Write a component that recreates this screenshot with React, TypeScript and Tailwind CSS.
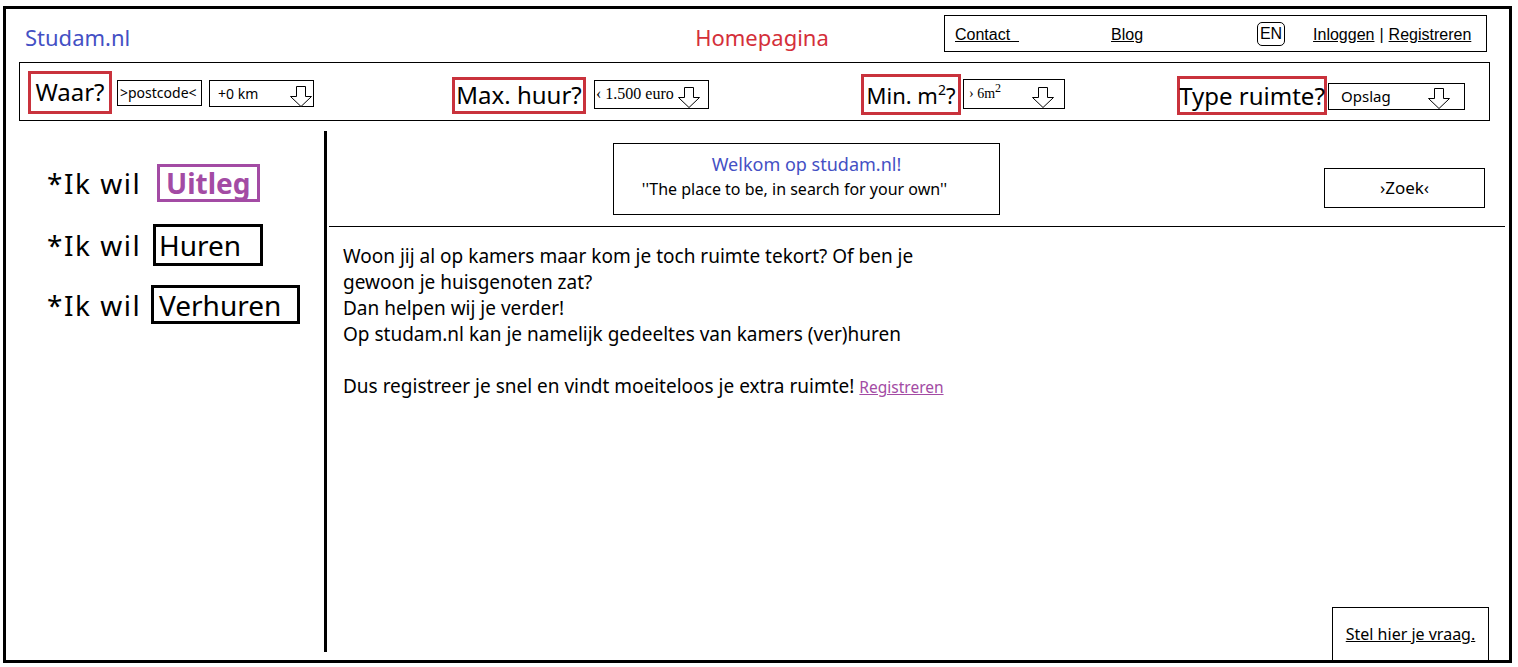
import React from "react";

function DownArrow() {
  return (
    <svg width="22" height="21" viewBox="0 0 22 21" className="block">
      <polygon
        points="6.5,0.5 15.5,0.5 15.5,10.5 21.5,10.5 11,20.5 0.5,10.5 6.5,10.5"
        fill="white"
        stroke="black"
        strokeWidth="1"
      />
    </svg>
  );
}

function RedLabel({ children, cls }: { children: React.ReactNode; cls: string }) {
  return (
    <div
      className={
        "border-[3px] border-[#c9323c] flex items-center justify-center whitespace-nowrap leading-none text-black font-['Comic_Sans_MS','Noto_Sans',sans-serif] " +
        cls
      }
    >
      {children}
    </div>
  );
}

export default function App() {
  return (
    <div className="w-[1518px] h-[667px] bg-white overflow-hidden pt-[6px] pl-[3px]">
      <div className="w-[1509px] h-[657px] border-[3px] border-black flex flex-col font-['Comic_Sans_MS','Noto_Sans',sans-serif]">
        {/* Header */}
        <div className="flex h-[53px] shrink-0">
          <div className="w-[574px] pl-[19px] pt-[13px] text-[22px] leading-[30px] text-[#4450c4]">
            Studam.nl
          </div>
          <div className="flex-1 flex justify-center pt-[13px] text-[22px] leading-[30px] text-[#d42f3a]">
            Homepagina
          </div>
          <div className="mt-[6px] mr-[22px] w-[543px] h-[37px] border border-black flex items-center pt-[2px] font-['Liberation_Sans',Arial,sans-serif] text-[16px] text-black">
            <span className="ml-[10px] underline whitespace-pre">Contact  </span>
            <span className="ml-[92px] underline">Blog</span>
            <span className="ml-[114px] w-[28px] h-[24px] -mt-[2px] border border-black rounded-[5px] flex items-center justify-center">
              EN
            </span>
            <span className="ml-[28px] underline">Inloggen</span>
            <span className="mx-[5px]">|</span>
            <span className="underline">Registreren</span>
          </div>
        </div>

        {/* Filter bar */}
        <div className="ml-[13px] mr-[19px] h-[59px] shrink-0 border border-black flex items-center">
          <RedLabel cls="ml-[8px] w-[84px] h-[43px] mt-[1px] text-[24px]">Waar?</RedLabel>
          <div className="ml-[5px] w-[85px] h-[26px] mt-[3px] border border-black flex items-center pl-[2px] text-[14px] leading-none whitespace-nowrap">
            &gt;postcode&lt;
          </div>
          <div className="ml-[7px] w-[105px] h-[27px] mt-[4px] border border-black flex items-end justify-between">
            <span className="self-center pl-[8px] text-[14px] leading-none">+0 km</span>
            <div className="mr-[1px] translate-y-[1px]">
              <DownArrow />
            </div>
          </div>

          <RedLabel cls="ml-[138px] w-[134px] h-[37px] mt-[7px] text-[24px]">Max. huur?</RedLabel>
          <div className="ml-[8px] w-[115px] h-[29px] mt-[5px] border border-black flex items-end justify-between">
            <span className="self-center pl-[1px] text-[16px] leading-none whitespace-nowrap font-['Liberation_Serif',serif]">
              &lsaquo; 1.500 euro
            </span>
            <div className="mr-[8px]">
              <DownArrow />
            </div>
          </div>

          <RedLabel cls="ml-[152px] w-[100px] h-[41px] mt-[6px] text-[22px]">
            <span>
              Min. m<sup className="text-[14px] -top-[9px] relative align-baseline">2</sup>?
            </span>
          </RedLabel>
          <div className="ml-[2px] w-[102px] h-[30px] mt-[4px] border border-black flex items-end justify-between">
            <span className="self-center pl-[5px] text-[14px] leading-none font-['Liberation_Serif',serif]">
              &rsaquo; 6m<sup className="text-[12px] relative -top-[6px] align-baseline">2</sup>
            </span>
            <div className="mr-[10px]">
              <DownArrow />
            </div>
          </div>

          <RedLabel cls="ml-[112px] w-[150px] h-[39px] mt-[8px] text-[24px]">Type ruimte?</RedLabel>
          <div className="ml-[1px] w-[137px] h-[27px] mt-[9px] border border-black flex items-end justify-between">
            <span className="self-center pl-[12px] text-[15px] leading-none">Opslag</span>
            <div className="mr-[14px]">
              <DownArrow />
            </div>
          </div>
        </div>

        {/* Main */}
        <div className="flex flex-1 min-h-0">
          {/* Left column */}
          <div className="w-[321px] h-[521px] mt-[10px] shrink-0 border-r-[3px] border-black flex flex-col pl-[41px] text-[28px] leading-none text-black">
            <div className="flex items-center mt-[33px]">
              <span className="w-[104px] tracking-[1.5px]">*Ik wil</span>
              <span className="ml-[6px] w-[103px] h-[38px] border-[3px] border-[#a34ba4] text-[#a34ba4] font-bold flex items-center pl-[6px]">
                Uitleg
              </span>
            </div>
            <div className="flex items-center mt-[22px]">
              <span className="w-[104px] tracking-[1.5px]">*Ik wil</span>
              <span className="ml-[2px] w-[110px] h-[42px] border-[3px] border-black flex items-center pl-[3px]">
                Huren
              </span>
            </div>
            <div className="flex items-center mt-[19px]">
              <span className="w-[104px] tracking-[1.5px]">*Ik wil</span>
              <span className="w-[149px] h-[39px] border-[3px] border-black flex items-center pl-[5px]">
                Verhuren
              </span>
            </div>
          </div>

          {/* Right column */}
          <div className="flex-1 flex flex-col min-w-0">
            <div className="flex items-start">
              <div className="mt-[22px] ml-[286px] w-[387px] h-[72px] border border-black flex flex-col items-center">
                <div className="mt-[8px] text-[18px] leading-[24px] text-[#4450c4]">Welkom op studam.nl!</div>
                <div className="mt-[2px] pr-[24px] text-[16px] leading-[22px] text-black">
                  ''The place to be, in search for your own''
                </div>
              </div>
              <div className="ml-auto mr-[24px] mt-[47px] w-[161px] h-[40px] border border-black flex items-center justify-center text-[17px]">
                &rsaquo;Zoek&lsaquo;
              </div>
            </div>
            <div className="mt-[11px] ml-[2px] mr-[4px] h-px bg-black shrink-0" />
            <div className="mt-[16px] pl-[16px] text-[19px] leading-[26px] text-black">
              <div>Woon jij al op kamers maar kom je toch ruimte tekort? Of ben je</div>
              <div>gewoon je huisgenoten zat?</div>
              <div>Dan helpen wij je verder!</div>
              <div>Op studam.nl kan je namelijk gedeeltes van kamers (ver)huren</div>
              <div>&nbsp;</div>
              <div>
                Dus registreer je snel en vindt moeiteloos je extra ruimte!{" "}
                <span className="text-[15.5px] text-[#a34ba4] underline">Registreren</span>
              </div>
            </div>
            <div className="mt-auto self-end mr-[20px] w-[157px] h-[53px] border-x border-t border-black flex items-center justify-center text-[16px] underline">
              Stel hier je vraag.
            </div>
          </div>
        </div>
      </div>
    </div>
  );
}
